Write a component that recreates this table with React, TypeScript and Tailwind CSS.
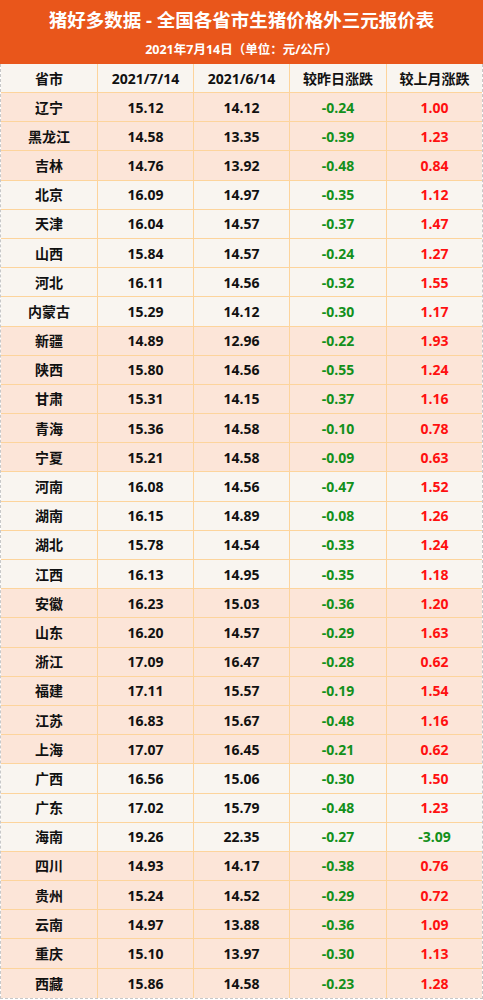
import React from 'react';

type Row = [string, string, string, string, string, boolean];

const rows: Row[] = [
  ['辽宁', '15.12', '14.12', '-0.24', '1.00', true],
  ['黑龙江', '14.58', '13.35', '-0.39', '1.23', true],
  ['吉林', '14.76', '13.92', '-0.48', '0.84', true],
  ['北京', '16.09', '14.97', '-0.35', '1.12', false],
  ['天津', '16.04', '14.57', '-0.37', '1.47', false],
  ['山西', '15.84', '14.57', '-0.24', '1.27', false],
  ['河北', '16.11', '14.56', '-0.32', '1.55', false],
  ['内蒙古', '15.29', '14.12', '-0.30', '1.17', false],
  ['新疆', '14.89', '12.96', '-0.22', '1.93', true],
  ['陕西', '15.80', '14.56', '-0.55', '1.24', true],
  ['甘肃', '15.31', '14.15', '-0.37', '1.16', true],
  ['青海', '15.36', '14.58', '-0.10', '0.78', true],
  ['宁夏', '15.21', '14.58', '-0.09', '0.63', true],
  ['河南', '16.08', '14.56', '-0.47', '1.52', false],
  ['湖南', '16.15', '14.89', '-0.08', '1.26', false],
  ['湖北', '15.78', '14.54', '-0.33', '1.24', false],
  ['江西', '16.13', '14.95', '-0.35', '1.18', false],
  ['安徽', '16.23', '15.03', '-0.36', '1.20', true],
  ['山东', '16.20', '14.57', '-0.29', '1.63', true],
  ['浙江', '17.09', '16.47', '-0.28', '0.62', true],
  ['福建', '17.11', '15.57', '-0.19', '1.54', true],
  ['江苏', '16.83', '15.67', '-0.48', '1.16', true],
  ['上海', '17.07', '16.45', '-0.21', '0.62', true],
  ['广西', '16.56', '15.06', '-0.30', '1.50', false],
  ['广东', '17.02', '15.79', '-0.48', '1.23', false],
  ['海南', '19.26', '22.35', '-0.27', '-3.09', false],
  ['四川', '14.93', '14.17', '-0.38', '0.76', true],
  ['贵州', '15.24', '14.52', '-0.29', '0.72', true],
  ['云南', '14.97', '13.88', '-0.36', '1.09', true],
  ['重庆', '15.10', '13.97', '-0.30', '1.13', true],
  ['西藏', '15.86', '14.58', '-0.23', '1.28', true],
];

const cols = 'grid grid-cols-[97px_96px_96px_97px_1fr]';
const cell = 'flex items-center justify-center border-r border-[#fdd49c] last:border-r-0';

function sign(v: string) {
  return v.startsWith('-') ? 'text-[#13901b]' : 'text-[#ff1010]';
}

export default function App() {
  return (
    <div
      className="w-[483px] bg-white"
      style={{ fontFamily: '"Open Sans", "Noto Sans CJK SC", sans-serif' }}
    >
      <div className="flex h-[64px] flex-col items-center bg-[#e9561b] text-white">
        <h1 className="mt-[7px] text-[18.5px] font-bold leading-[26px]">猪好多数据 - 全国各省市生猪价格外三元报价表</h1>
        <p className="mt-[8px] text-[12.5px] font-bold leading-[18px]">2021年7月14日（单位：元/公斤）</p>
      </div>

      <div className="border-x border-b border-dashed border-[#c8c8c8] text-[14px] font-bold text-[#111]">
        <div className={`${cols} h-[29px] border-b border-[#fdd49c] bg-[#f9f5f0]`}>
          <div className={cell}>省市</div>
          <div className={cell}>2021/7/14</div>
          <div className={cell}>2021/6/14</div>
          <div className={cell}>较昨日涨跌</div>
          <div className={cell}>较上月涨跌</div>
        </div>
        {rows.map(([name, a, b, c, d, peach]) => (
          <div
            key={name}
            className={`${cols} h-[29.2px] border-b border-[#fdd49c] last:border-b-0 ${peach ? 'bg-[#fce5d8]' : 'bg-[#f9f5f0]'}`}
          >
            <div className={cell}>{name}</div>
            <div className={cell}>{a}</div>
            <div className={cell}>{b}</div>
            <div className={`${cell} ${sign(c)}`}>{c}</div>
            <div className={`${cell} ${sign(d)}`}>{d}</div>
          </div>
        ))}
      </div>
    </div>
  );
}
